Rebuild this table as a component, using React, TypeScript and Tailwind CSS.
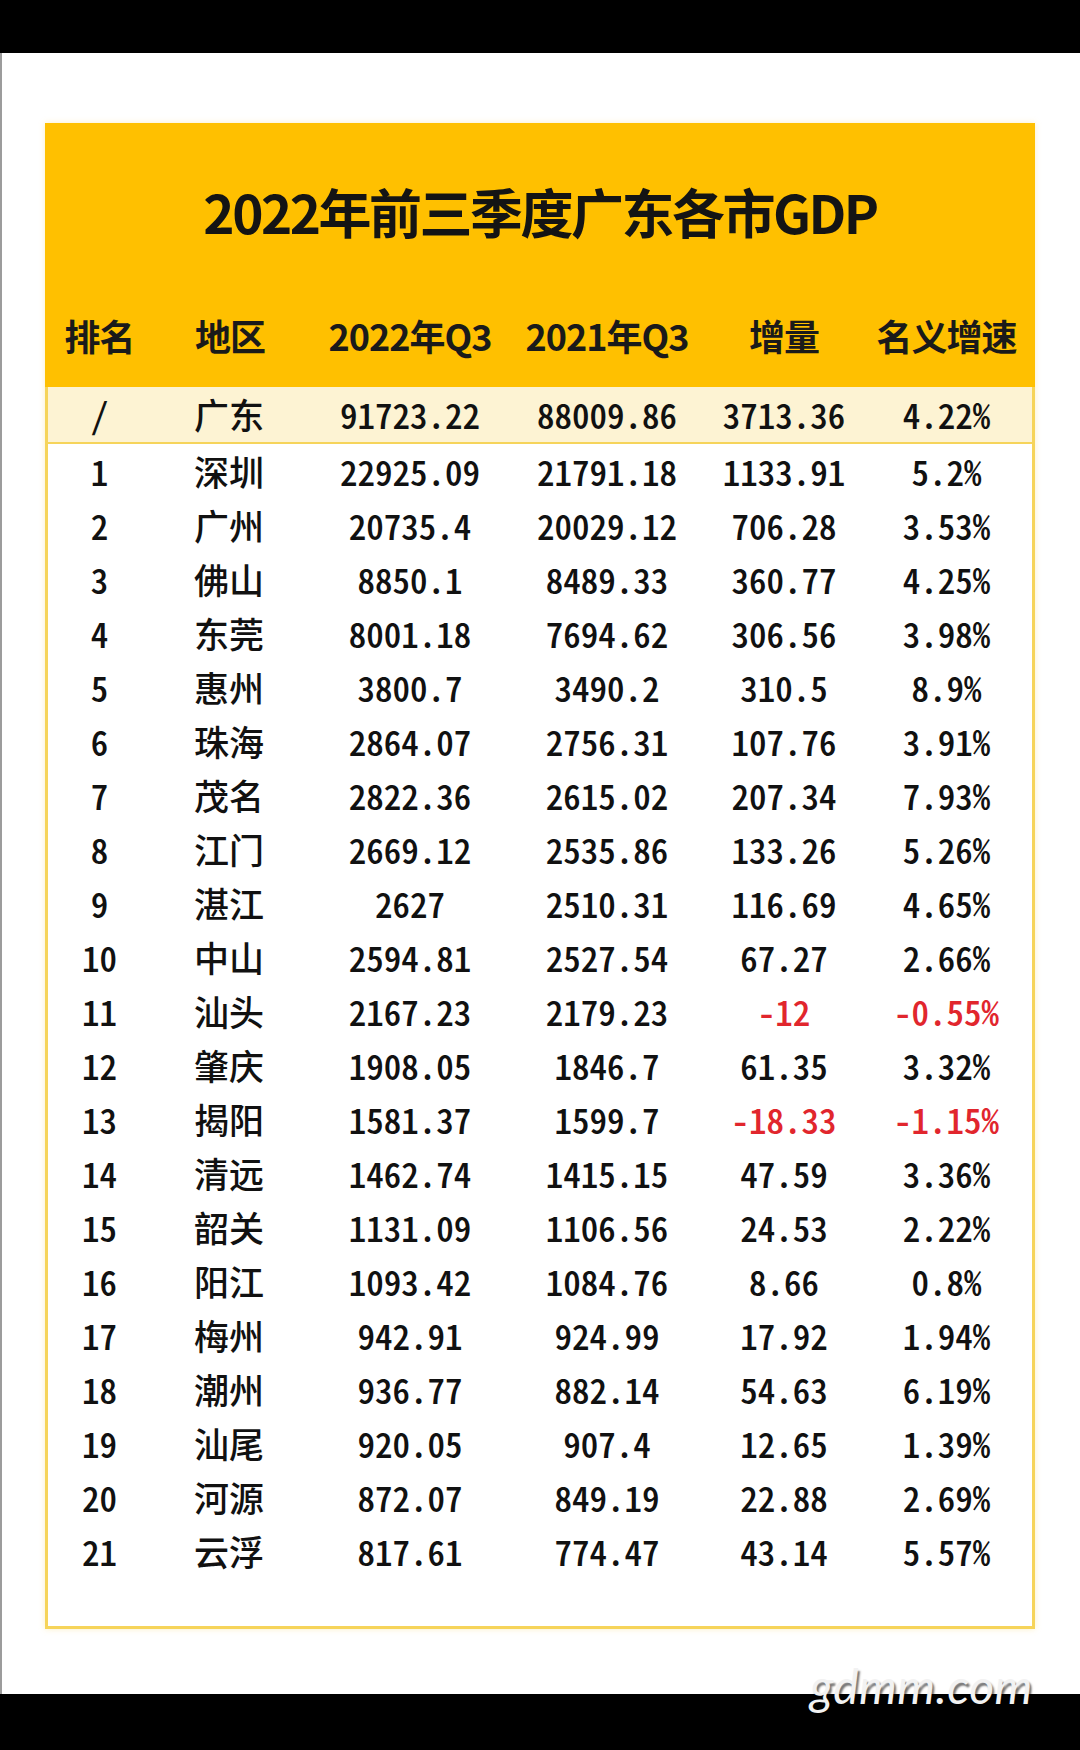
import React from "react";

type Row = [string, string, string, string, string, string, boolean?];

const rows: Row[] = [
  ["1", "深圳", "22925.09", "21791.18", "1133.91", "5.2%"],
  ["2", "广州", "20735.4", "20029.12", "706.28", "3.53%"],
  ["3", "佛山", "8850.1", "8489.33", "360.77", "4.25%"],
  ["4", "东莞", "8001.18", "7694.62", "306.56", "3.98%"],
  ["5", "惠州", "3800.7", "3490.2", "310.5", "8.9%"],
  ["6", "珠海", "2864.07", "2756.31", "107.76", "3.91%"],
  ["7", "茂名", "2822.36", "2615.02", "207.34", "7.93%"],
  ["8", "江门", "2669.12", "2535.86", "133.26", "5.26%"],
  ["9", "湛江", "2627", "2510.31", "116.69", "4.65%"],
  ["10", "中山", "2594.81", "2527.54", "67.27", "2.66%"],
  ["11", "汕头", "2167.23", "2179.23", "-12", "-0.55%", true],
  ["12", "肇庆", "1908.05", "1846.7", "61.35", "3.32%"],
  ["13", "揭阳", "1581.37", "1599.7", "-18.33", "-1.15%", true],
  ["14", "清远", "1462.74", "1415.15", "47.59", "3.36%"],
  ["15", "韶关", "1131.09", "1106.56", "24.53", "2.22%"],
  ["16", "阳江", "1093.42", "1084.76", "8.66", "0.8%"],
  ["17", "梅州", "942.91", "924.99", "17.92", "1.94%"],
  ["18", "潮州", "936.77", "882.14", "54.63", "6.19%"],
  ["19", "汕尾", "920.05", "907.4", "12.65", "1.39%"],
  ["20", "河源", "872.07", "849.19", "22.88", "2.69%"],
  ["21", "云浮", "817.61", "774.47", "43.14", "5.57%"],
];

const grid = "grid grid-cols-[103px_162px_194px_200px_154px_171px] items-center text-center";

function DataRow({ r, h, bg }: { r: Row; h: string; bg?: string }) {
  const red = r[6];
  return (
    <div className={`${grid} ${h} ${bg ?? ""} text-[35px] font-medium text-[#111111] [font-feature-settings:'hwid']`}>
      <div>{r[0]}</div>
      <div className="pr-[6px]">{r[1]}</div>
      <div>{r[2]}</div>
      <div>{r[3]}</div>
      <div className={red ? "text-[#e1262d]" : ""}>{r[4]}</div>
      <div className={red ? "text-[#e1262d]" : ""}>{r[5]}</div>
    </div>
  );
}

export default function App() {
  return (
    <div className="relative w-[1080px] h-[1750px] bg-white flex flex-col overflow-hidden font-['Noto_Sans_CJK_SC',sans-serif]">
      <div className="h-[53px] bg-black shrink-0" />
      <div className="flex-1 border-l-2 border-[#9c9c9c] pl-[43px] pt-[70px]">
        <div className="w-[990px] border-[3px] border-t-0 border-[#f6d45a] shadow-[0_0_6px_rgba(246,212,90,0.35)]">
          <div className="bg-[#ffc000] -mx-[3px]">
            <div className="h-[178px] flex items-center justify-center text-[53px] font-bold text-[#141414] tracking-[-2.5px]">
              2022年前三季度广东各市GDP
            </div>
            <div className={`${grid} h-[86px] pb-[18px] px-[3px] text-[36px] font-bold text-[#1a1a1a] tracking-[-1px]`}>
              <div>排名</div>
              <div className="pr-[4px]">地区</div>
              <div>2022年Q3</div>
              <div>2021年Q3</div>
              <div>增量</div>
              <div>名义增速</div>
            </div>
          </div>
          <div className="border-b-2 border-[#f6d45a]">
            <DataRow r={["/", "广东", "91723.22", "88009.86", "3713.36", "4.22%"]} h="h-[55px]" bg="bg-[#fdf3d3]" />
          </div>
          <div className="flex flex-col pb-[48px]">
            {rows.map((r) => (
              <DataRow key={r[0]} r={r} h="h-[54px]" />
            ))}
          </div>
        </div>
      </div>
      <div className="h-[56px] bg-black shrink-0" />
      <div className="absolute left-[810px] top-[1662px] text-[48px] leading-none font-['Lato',sans-serif] italic font-normal text-[#f2f2f2] tracking-[0.5px] [text-shadow:2px_3px_2px_rgba(0,0,0,0.55)]">
        gdmm.com
      </div>
    </div>
  );
}
